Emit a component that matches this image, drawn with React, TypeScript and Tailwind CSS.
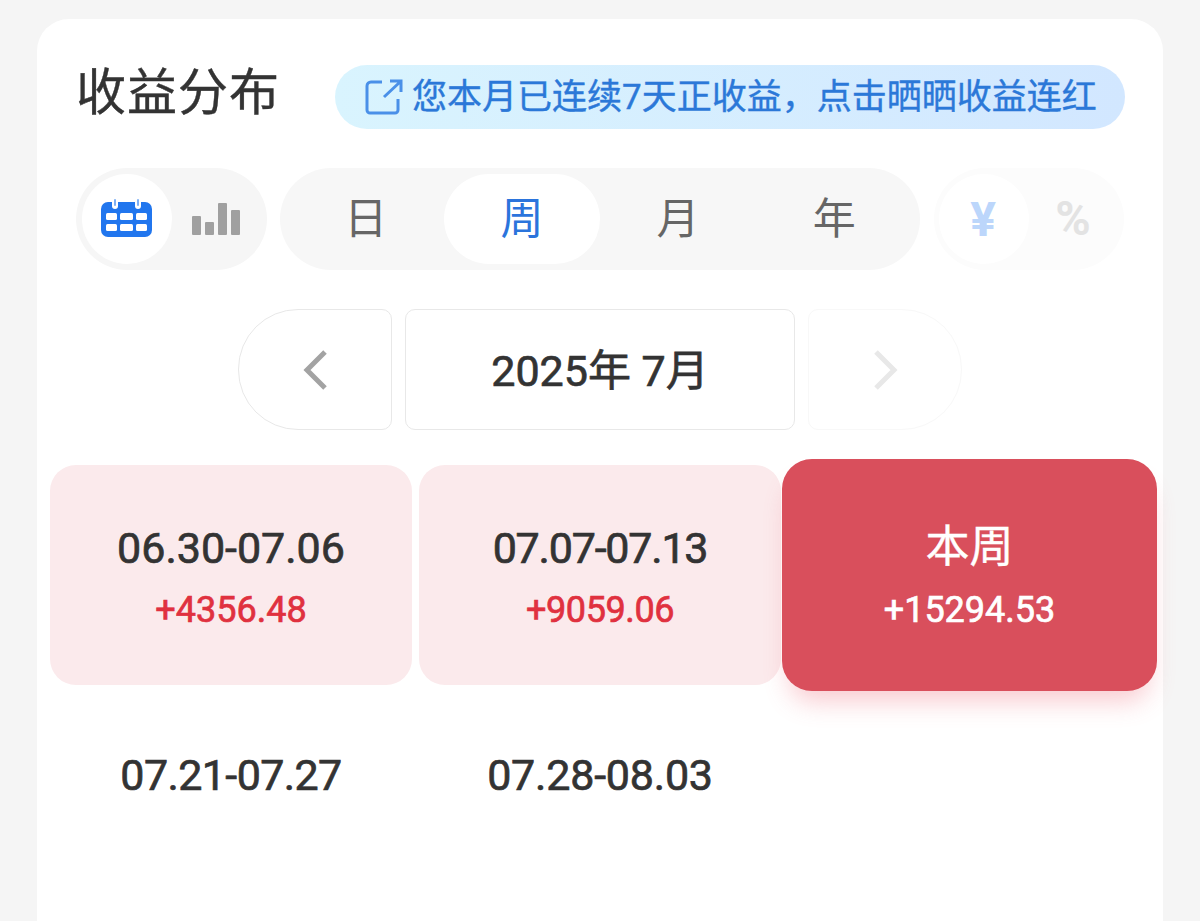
const font = "font-['Roboto','Noto_Sans_CJK_SC',sans-serif]";

function CalendarIcon() {
  return (
    <svg width="52" height="40" viewBox="0 0 52 40">
      <rect x="0" y="3" width="51" height="35" rx="7" fill="#2176ee" />
      <rect x="11" y="0" width="6" height="10" rx="3" fill="#fff" />
      <rect x="34" y="0" width="6" height="10" rx="3" fill="#fff" />
      <rect x="13" y="0" width="2" height="7" rx="1" fill="#7fb0f4" />
      <rect x="36" y="0" width="2" height="7" rx="1" fill="#7fb0f4" />
      <rect x="5" y="14" width="11" height="7" rx="1.5" fill="#fff" />
      <rect x="19" y="14" width="13" height="7" rx="1.5" fill="#fff" />
      <rect x="35" y="14" width="11" height="7" rx="1.5" fill="#fff" />
      <rect x="5" y="25" width="11" height="7" rx="1.5" fill="#fff" />
      <rect x="19" y="25" width="13" height="7" rx="1.5" fill="#fff" />
      <rect x="35" y="25" width="11" height="7" rx="1.5" fill="#fff" />
    </svg>
  );
}

function BarsIcon() {
  return (
    <svg width="48" height="32" viewBox="0 0 48 32" fill="#a0a0a0">
      <rect x="0" y="13" width="9" height="19" rx="1" />
      <rect x="13" y="19" width="9" height="13" rx="1" />
      <rect x="26" y="0" width="9" height="32" rx="1" />
      <rect x="39" y="7" width="9" height="25" rx="1" />
    </svg>
  );
}

function ShareIcon() {
  return (
    <svg width="38" height="36" viewBox="0 0 38 36" fill="none" stroke="#4a90e8" strokeWidth="3">
      <path d="M17 3H6a4 4 0 0 0-4 4v24a3 3 0 0 0 3 3h25a3 3 0 0 0 3-3V20" />
      <path d="M19 18L35 3M25 2h11v11" />
    </svg>
  );
}

function Chevron({ dir, color }: { dir: "left" | "right"; color: string }) {
  return (
    <svg width="28" height="40" viewBox="0 0 28 40" fill="none" stroke={color} strokeWidth="5">
      <path d={dir === "left" ? "M24 2L6 20l18 18" : "M4 2l18 18L4 38"} />
    </svg>
  );
}

const tabs = ["日", "周", "月", "年"];

// the reference's digits are proportional, Roboto's are not, so each label gets its own tracking
const weeks = [
  { label: "06.30-07.06", value: "+4356.48", kind: "gain", tracking: "tracking-[0px]", valueTracking: "" },
  { label: "07.07-07.13", value: "+9059.06", kind: "gain", tracking: "tracking-[-1.2px]", valueTracking: "tracking-[-0.4px]" },
  { label: "本周", value: "+15294.53", kind: "active", tracking: "", valueTracking: "" },
  { label: "07.21-07.27", value: "", kind: "empty", tracking: "tracking-[-0.6px]", valueTracking: "" },
  { label: "07.28-08.03", value: "", kind: "empty", tracking: "tracking-[-0.2px]", valueTracking: "" },
];

type Week = { label: string; value: string; kind: string; tracking: string; valueTracking: string };

// weights between Roboto's 400 and 500
const semi = "[-webkit-text-stroke:0.4px]";
const digits = "[-webkit-text-stroke:0.7px]";

function WeekCard({ label, value, kind, tracking, valueTracking }: Week) {
  if (kind === "active") {
    return (
      <div className="relative -my-[6px] -mr-[7px] -ml-[6px] flex flex-col items-center rounded-[30px] bg-[#d94f5c] pt-[61px] text-white shadow-[0_18px_26px_-8px_rgba(236,90,106,0.32)]">
        <div className={`text-[44px] leading-[54px] ${semi}`}>{label}</div>
        <div className={`mt-[14px] text-[36px] leading-[44px] ${digits}`}>{value}</div>
      </div>
    );
  }
  return (
    <div className={`flex flex-col items-center rounded-[26px] pt-[56px] ${kind === "gain" ? "bg-[#fbeaec]" : "bg-white"}`}>
      <div className={`text-[43px] leading-[54px] text-[#333] ${digits} ${tracking}`}>{label}</div>
      <div className={`mt-[13px] text-[36px] leading-[44px] text-[#e0313f] ${digits} ${valueTracking}`}>{value}</div>
    </div>
  );
}

export default function App() {
  return (
    <div className={`${font} h-[921px] overflow-hidden bg-[#f5f5f5] px-[37px] pt-[19px]`}>
      <div className="h-[902px] rounded-t-[32px] bg-white">
        <div className="flex items-center justify-between pt-[46px] pr-[38px] pl-[39px]">
          <div className={`pb-2 text-[50px] leading-[56px] tracking-[1px] text-[#333] ${semi}`}>收益分布</div>
          <div className="flex h-[64px] w-[790px] items-center gap-[9px] rounded-full bg-linear-to-r from-[#d9f4fe] to-[#d2e7ff] pl-[30px] text-[#2b78d8]">
            <ShareIcon />
            <span className={`text-[35px] leading-none whitespace-nowrap ${semi}`}>您本月已连续7天正收益，点击晒晒收益连红</span>
          </div>
        </div>

        <div className="mt-[39px] flex gap-[13px] px-[39px]">
          <div className="flex h-[102px] w-[191px] items-center rounded-full bg-[#f6f6f6] pl-[6px]">
            <div className="flex size-[90px] items-center justify-center rounded-full bg-white">
              <CalendarIcon />
            </div>
            <div className="ml-[20px]">
              <BarsIcon />
            </div>
          </div>

          <div className="flex h-[102px] w-[641px] items-center rounded-full bg-[#f7f7f7] px-[8px]">
            {tabs.map((t) => (
              <div
                key={t}
                className={`flex h-[90px] flex-1 items-center justify-center rounded-full text-[43px] ${
                  t === "周" ? "bg-white text-[#2b74dc]" : "text-[#666]"
                }`}
              >
                {t}
              </div>
            ))}
          </div>

          <div className="ml-[1px] flex h-[102px] w-[190px] items-center rounded-full bg-[#fcfcfc] pl-[5px]">
            <div className="flex size-[90px] items-center justify-center rounded-full bg-white pr-[2px] pt-[1px] text-[48px] font-bold text-[#bcd6fb]">
              ¥
            </div>
            <div className="ml-[26px] pb-[1px] text-[48px] leading-none font-bold text-[#e3e3e3]">%</div>
          </div>
        </div>

        <div className="mt-[39px] flex justify-center gap-[13px]">
          <div className="flex h-[121px] w-[154px] items-center justify-start rounded-l-[60px] rounded-r-[10px] border border-[#e8e8e8] pl-[62px]">
            <Chevron dir="left" color="#a3a3a3" />
          </div>
          <div className={`flex h-[121px] w-[390px] items-center justify-center rounded-[10px] border border-[#e8e8e8] pt-[3px] text-[43px] text-[#333] ${digits}`}>
            2025年 7月
          </div>
          <div className="flex h-[121px] w-[154px] items-center justify-start rounded-l-[10px] rounded-r-[60px] border border-[#f8f8f8] pl-[63px]">
            <Chevron dir="right" color="#e8e8e8" />
          </div>
        </div>

        <div className="mt-[35px] grid grid-cols-3 auto-rows-[220px] gap-[7px] px-[13px]">
          {weeks.map((w) => (
            <WeekCard key={w.label} {...w} />
          ))}
        </div>
      </div>
    </div>
  );
}
